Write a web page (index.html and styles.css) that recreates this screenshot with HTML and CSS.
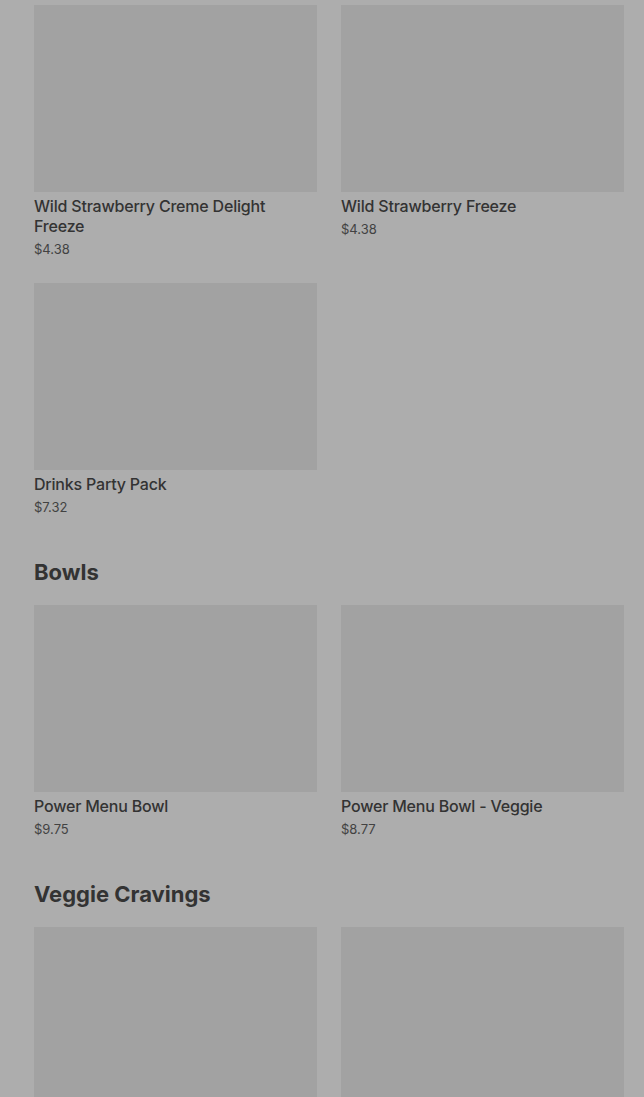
FILE: index.html
```html
<!DOCTYPE html>
<html>
<head>
<meta charset="utf-8">
<link rel="stylesheet" href="styles.css">
</head>
<body>
<main class="page">
  <section class="section">
    <div class="grid">
      <div class="card">
        <div class="thumb"></div>
        <div class="name">Wild Strawberry Creme Delight Freeze</div>
        <div class="price">$4.38</div>
      </div>
      <div class="card">
        <div class="thumb"></div>
        <div class="name">Wild Strawberry Freeze</div>
        <div class="price">$4.38</div>
      </div>
      <div class="card">
        <div class="thumb"></div>
        <div class="name">Drinks Party Pack</div>
        <div class="price">$7.32</div>
      </div>
    </div>
  </section>
  <section class="section">
    <h2 class="heading">Bowls</h2>
    <div class="grid">
      <div class="card">
        <div class="thumb"></div>
        <div class="name">Power Menu Bowl</div>
        <div class="price">$9.75</div>
      </div>
      <div class="card">
        <div class="thumb"></div>
        <div class="name">Power Menu Bowl - Veggie</div>
        <div class="price">$8.77</div>
      </div>
    </div>
  </section>
  <section class="section">
    <h2 class="heading">Veggie Cravings</h2>
    <div class="grid">
      <div class="card">
        <div class="thumb"></div>
      </div>
      <div class="card">
        <div class="thumb"></div>
      </div>
    </div>
  </section>
</main>
</body>
</html>
```

FILE: styles.css
```css
html, body {
  margin: 0;
  padding: 0;
  background: #adadad;
}
body {
  font-family: Inter, Roboto, "Liberation Sans", sans-serif;
  color: #333333;
  overflow: hidden;
}
.page {
  padding: 5px 20px 0 34px;
}
.section {
  margin-bottom: 42px;
}
.grid {
  display: grid;
  grid-template-columns: 283px 283px;
  column-gap: 24px;
  row-gap: 25px;
}
.thumb {
  height: 187px;
  background: #a2a2a2;
  margin-bottom: 4px;
}
.name {
  font-size: 16px;
  font-weight: 500;
  line-height: 20px;
  letter-spacing: -0.2px;
  color: #333333;
}
.price {
  font-size: 13px;
  line-height: 18px;
  margin-top: 4px;
  color: #424242;
}
.heading {
  margin: 0 0 19px;
  font-size: 22px;
  font-weight: 700;
  line-height: 28px;
  color: #333333;
}
```
